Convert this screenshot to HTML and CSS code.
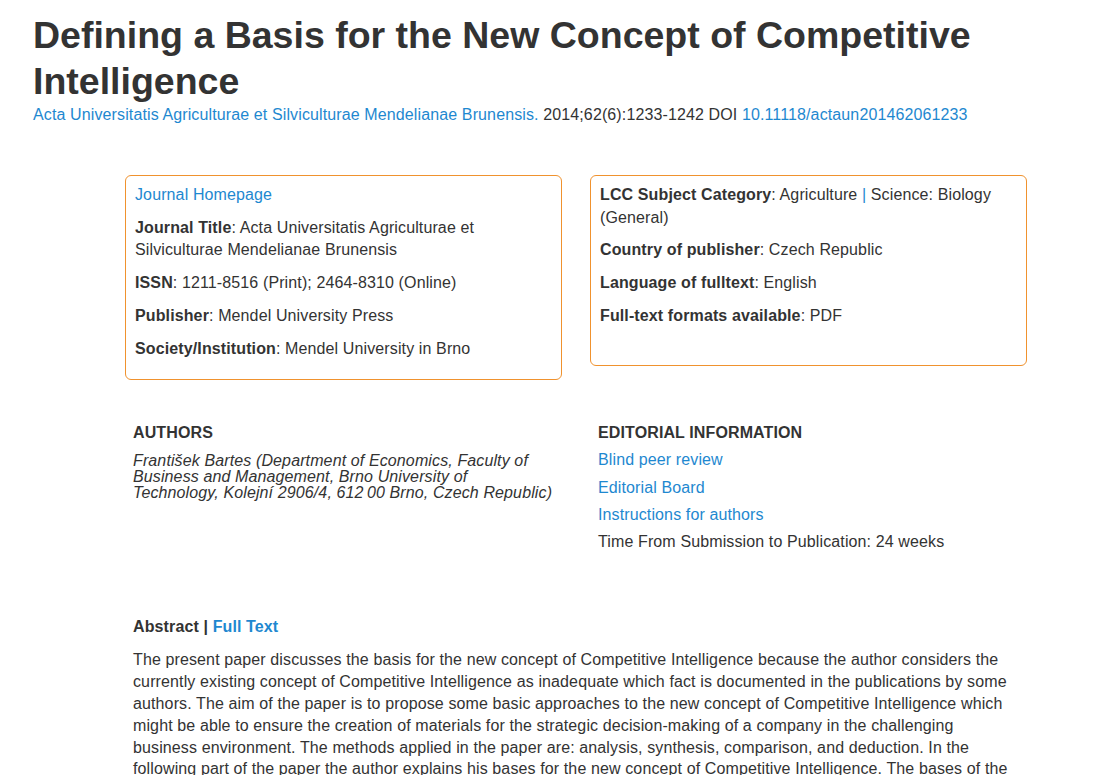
FILE: index.html
```html
<!DOCTYPE html>
<html>
    <head>
        <meta name="viewport" content="width=device-width, initial-scale=1.0">
        <meta charset="utf-8">
        <title>Defining a Basis for the New Concept of Competitive Intelligence</title>
        <link rel="stylesheet" href="styles.css">
    </head>
    <body>
        <div class="header">
            <h1>Defining a Basis for the New Concept of Competitive Intelligence</h1>
            <div class="citation">
                <a href="#">Acta Universitatis Agriculturae et Silviculturae Mendelianae Brunensis.</a>
                2014;62(6):1233-1242 DOI <a href="#">10.11118/actaun201462061233</a>
            </div>
        </div>

        <div class="content">
            <div class="row">
                <div class="box">
                    <p><a href="#">Journal Homepage</a></p>
                    <p><b>Journal Title</b>: Acta Universitatis Agriculturae et Silviculturae Mendelianae Brunensis</p>
                    <p><b>ISSN</b>: 1211-8516 (Print); 2464-8310 (Online)</p>
                    <p><b>Publisher</b>: Mendel University Press</p>
                    <p><b>Society/Institution</b>: Mendel University in Brno</p>
                </div>
                <div class="box short">
                    <p><b>LCC Subject Category</b>: Agriculture <span class="sep">|</span> Science: Biology (General)</p>
                    <p><b>Country of publisher</b>: Czech Republic</p>
                    <p><b>Language of fulltext</b>: English</p>
                    <p><b>Full-text formats available</b>: PDF</p>
                </div>
            </div>

            <div class="row info">
                <div class="col">
                    <h4>AUTHORS</h4>
                    <div class="authors">František Bartes (Department of Economics, Faculty of Business and Management, Brno University of Technology, Kolejní 2906/4, 612&#8239;00 Brno, Czech Republic)</div>
                </div>
                <div class="col">
                    <h4>EDITORIAL INFORMATION</h4>
                    <ul class="links">
                        <li><a href="#">Blind peer review</a></li>
                        <li><a href="#">Editorial Board</a></li>
                        <li><a href="#">Instructions for authors</a></li>
                        <li>Time From Submission to Publication: 24 weeks</li>
                    </ul>
                </div>
            </div>

            <div class="abstract">
                <h4>Abstract <span class="sep">|</span> <a href="#">Full Text</a></h4>
                <p>The present paper discusses the basis for the new concept of Competitive Intelligence because the author considers the currently existing concept of Competitive Intelligence as inadequate which fact is documented in the publications by some authors. The aim of the paper is to propose some basic approaches to the new concept of Competitive Intelligence which might be able to ensure the creation of materials for the strategic decision-making of a company in the challenging business environment. The methods applied in the paper are: analysis, synthesis, comparison, and deduction. In the following part of the paper the author explains his bases for the new concept of Competitive Intelligence. The bases of the new concept are derived from the needs of the strategic management of a company and from the requirements placed on the quality of the information produced.</p>
            </div>
        </div>
    </body>
</html>
```

FILE: styles.css
```css
body{
    margin:0;
    font-family:"Liberation Sans", Arial, sans-serif;
    font-size:16px;
    line-height:22.8px;
    letter-spacing:0.12px;
    color:#333;
    background-color:#fff;
}
a{
    color:#1e88d0;
    text-decoration:none;
}
.header{
    padding:12px 33px 0;
}
h1{
    margin:0;
    font-size:37.5px;
    line-height:46px;
    font-weight:bold;
    letter-spacing:0;
    color:#333;
}
.citation{
    margin-top:0;
}
.content{
    width:902px;
    margin:48px 0 0 125px;
}
.row{
    display:flex;
    gap:28px;
    align-items:flex-start;
}
.box{
    flex:1;
    border:1px solid #f0922e;
    border-radius:6px;
    padding:8px 10px 18px 9px;
}
.box.short{
    padding-bottom:37px;
}
.box p{
    margin:0 0 10px;
}
.box p:last-child{
    margin-bottom:0;
}
.sep{
    color:#1e88d0;
}
.info{
    margin-top:42px;
}
.col{
    flex:1;
    padding:0 8px;
}
h4{
    margin:0 0 5px;
    font-size:16px;
    font-weight:bold;
    line-height:22.8px;
}
.authors{
    font-style:italic;
    line-height:16px;
    padding-top:3.5px;
}
.links{
    list-style:none;
    margin:0;
    padding:0;
}
.links li{
    margin-bottom:4.5px;
}
.abstract{
    margin-top:57px;
    padding:0 8px;
}
.abstract h4{
    margin-bottom:11px;
}
.abstract h4 .sep{
    color:#333;
}
.abstract p{
    margin:0;
    line-height:21.8px;
}
```
